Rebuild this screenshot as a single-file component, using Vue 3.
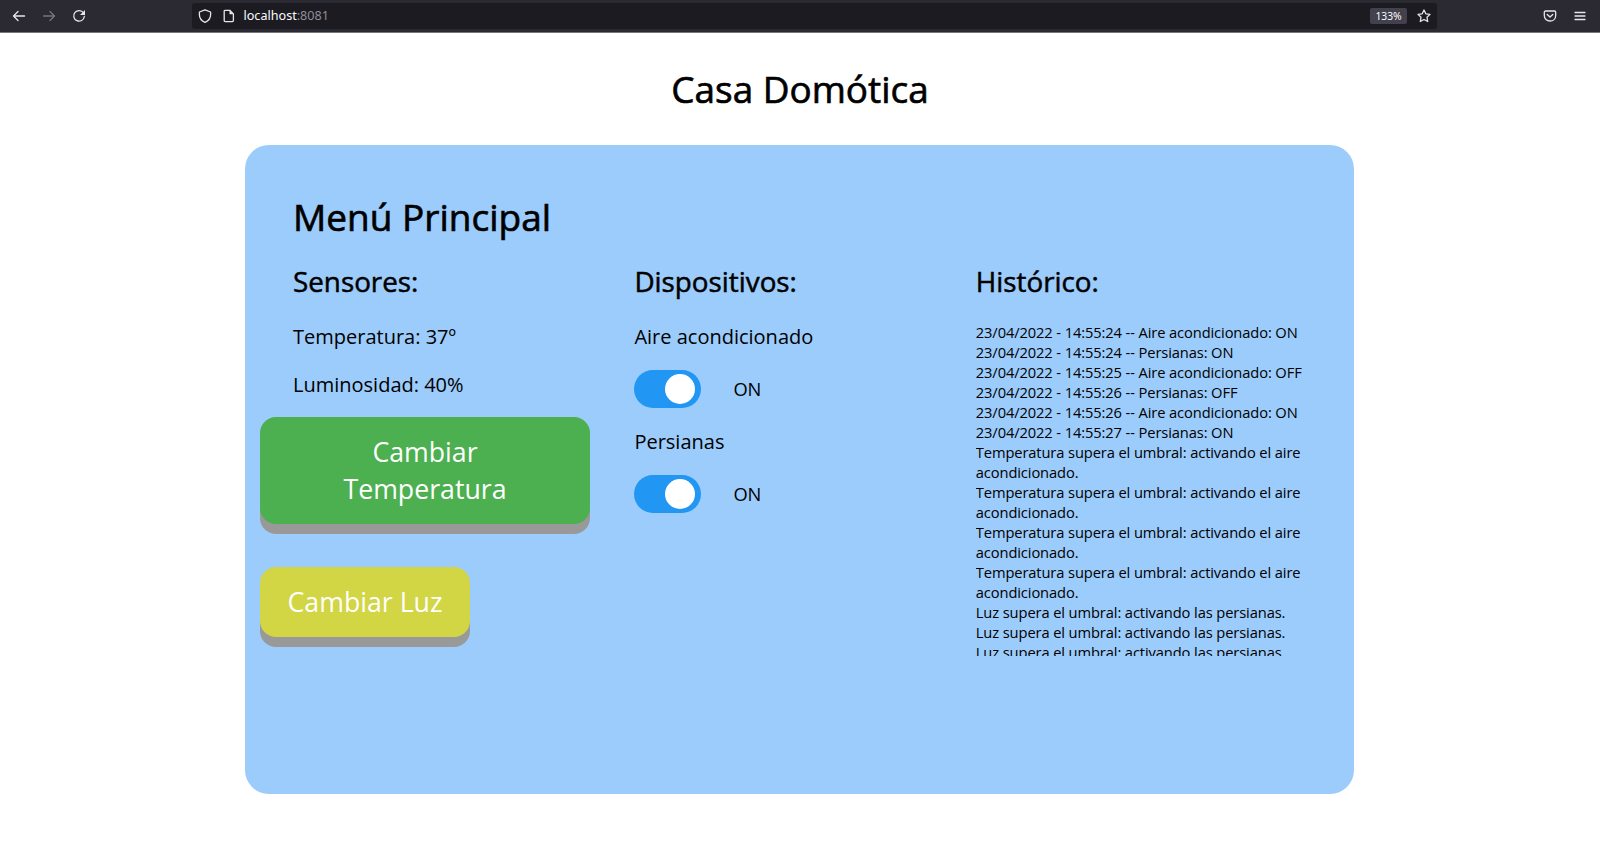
<script setup>
import { ref } from 'vue'

const devices = ref([
  { name: 'Aire acondicionado', on: true },
  { name: 'Persianas', on: true },
])

const hot = 'Temperatura supera el umbral: activando el aire acondicionado.'
const bright = 'Luz supera el umbral: activando las persianas.'
const log = [
  '23/04/2022 - 14:55:24 -- Aire acondicionado: ON',
  '23/04/2022 - 14:55:24 -- Persianas: ON',
  '23/04/2022 - 14:55:25 -- Aire acondicionado: OFF',
  '23/04/2022 - 14:55:26 -- Persianas: OFF',
  '23/04/2022 - 14:55:26 -- Aire acondicionado: ON',
  '23/04/2022 - 14:55:27 -- Persianas: ON',
  hot, hot, hot, hot,
  bright, bright, bright,
]
</script>

<template>
  <div class="page">
    <header class="toolbar">
      <nav class="nav">
        <svg width="14" height="14" viewBox="0 0 14 14"><path d="M12.500 7H1.500M6 2.500L1.500 7 6 11.500" /></svg>
        <svg class="dim" width="14" height="14" viewBox="0 0 14 14"><path d="M1.500 7h11M8 2.500L12.500 7 8 11.500" /></svg>
        <svg width="14" height="14" viewBox="0 0 14 14"><path d="M11.500 4A5.300 5.300 0 1 0 12.300 7.500" /><path class="solid" d="M13 1v5H8z" /></svg>
      </nav>
      <div class="address">
        <svg width="14" height="14" viewBox="0 0 14 14"><path d="M7 .8L12.600 3v2.700c0 3.500-2 6-5.600 7.600C3.400 11.700 1.400 9.200 1.400 5.700V3z" /></svg>
        <svg class="doc" width="12" height="14" viewBox="0 0 12 14"><path d="M2.200 1.300h4.600l3.600 3.600v6.700c0 .6-.4 1-1 1H2.200c-.6 0-1-.4-1-1V2.300c0-.6.4-1 1-1z" /><path class="solid" d="M6.500 1v4.300h4.200z" /></svg>
        <span class="url">localhost<span class="port">:8081</span></span>
        <span class="zoom">133%</span>
        <svg width="14" height="14" viewBox="0 0 14 14"><path d="M7 1l1.800 3.800 4.200.6-3 2.900.7 4.200L7 10.500l-3.700 2 .7-4.200-3-2.900 4.200-.6z" /></svg>
      </div>
      <div class="tools">
        <svg width="14" height="14" viewBox="0 0 14 14"><path d="M2.500 2h9c.7 0 1.200.5 1.200 1.200v3.200C12.700 9.700 10.200 12 7 12S1.300 9.700 1.300 6.400V3.200C1.300 2.500 1.800 2 2.500 2zM4.200 5.500L7 8.100l2.800-2.600" /></svg>
        <svg width="12" height="12" viewBox="0 0 12 12"><path d="M1 2.500h10M1 6h10M1 9.500h10" /></svg>
      </div>
    </header>

    <h1 class="title">Casa Domótica</h1>

    <main class="card">
      <h1 class="menu">Menú Principal</h1>
      <div class="columns">
        <section>
          <h2>Sensores:</h2>
          <p class="reading">Temperatura: 37º</p>
          <p class="reading">Luminosidad: 40%</p>
          <div class="actions">
            <button class="btn temp">Cambiar Temperatura</button>
            <button class="btn light">Cambiar Luz</button>
          </div>
        </section>
        <section>
          <h2>Dispositivos:</h2>
          <div v-for="d in devices" :key="d.name" class="device">
            <p class="name">{{ d.name }}</p>
            <div class="control">
              <button class="switch" :class="{ on: d.on }" :aria-label="d.name" @click="d.on = !d.on"><i class="knob"></i></button>
              <span class="state">{{ d.on ? 'ON' : 'OFF' }}</span>
            </div>
          </div>
        </section>
        <section>
          <h2>Histórico:</h2>
          <div class="log">
            <div v-for="(line, i) in log" :key="i">{{ line }}</div>
          </div>
        </section>
      </div>
    </main>
  </div>
</template>

<style>
body { margin: 0; background: #fff; }
</style>

<style scoped>
* { box-sizing: border-box; }
h1, h2, p { margin: 0; font-weight: 500; }
h1 { -webkit-text-stroke: .65px #000; }
h2 { -webkit-text-stroke: .5px #000; }
.page { height: 859px; overflow: hidden; background: #fff; color: #000; font-family: "Open Sans", "Noto Sans", sans-serif; }

.toolbar { display: flex; align-items: center; height: 33px; padding-bottom: 1px; background: #2b2a33; border-bottom: 1px solid #77767b; }
svg { display: block; flex: none; fill: none; stroke: #e6e6ea; stroke-width: 1.3; stroke-linecap: round; stroke-linejoin: round; }
svg .solid { fill: #e6e6ea; stroke: none; }
.dim { opacity: .4; }
.nav { display: flex; gap: 16px; width: 192px; padding-left: 12px; }
.address { display: flex; align-items: center; width: 1245px; height: 26px; padding: 0 6px; background: #1c1b22; border-radius: 3px; }
.doc { margin-left: 11px; }
.url { flex: 1; margin-left: 8.500px; font: 12.600px/20px "Noto Sans", sans-serif; color: #fbfbfe; }
.port { color: #8f8e96; }
.zoom { width: 37px; height: 16px; margin-right: 10px; border-radius: 2px; background: #42414d; color: #fbfbfe; font: 10.300px/16px "Noto Sans", sans-serif; text-align: center; }
.tools { display: flex; align-items: center; gap: 17px; margin-left: auto; padding-right: 14px; }

.title { margin-top: 32px; line-height: 49px; font-size: 36.900px; text-align: center; }
.card { width: 1109px; height: 649px; margin: 31px 0 0 245px; padding: 47px 37px 0 48px; border-radius: 24px; background: #9cccfb; }
.menu { line-height: 49px; font-size: 37px; }
.columns { display: grid; grid-template-columns: repeat(3, 341.400px); margin-top: 20px; }
h2 { line-height: 40px; font-size: 27.800px; }
.reading, .name { font-weight: 400; font-size: 20px; line-height: 28px; }
.reading { margin-top: 20px; }
h2 + .reading { margin-top: 22px; }
.actions { display: flex; flex-direction: column; align-items: flex-start; margin: 18px 0 0 -33px; }
.btn { padding: 17px 28px; border: 0; border-radius: 16px; color: #fff; font: 400 26.700px/36.500px "Open Sans", sans-serif; box-shadow: 0 10px #999; }
.temp { width: 330px; height: 107px; background: #4caf50; }
.light { width: 210px; height: 70px; padding: 17px 0; margin-top: 43px; background: #d2d544; }
.device { height: 105px; }
h2 + .device { margin-top: 22px; }
.control { display: flex; align-items: center; margin-top: 19px; }
.switch { display: flex; align-items: center; width: 67px; height: 38px; padding: 0 6px; border: 0; border-radius: 19px; background: #ccc; }
.switch.on { justify-content: flex-end; background: #2196f3; }
.knob { width: 30px; height: 30px; border-radius: 50%; background: #fff; }
.state { margin-left: 32px; font-size: 18.300px; line-height: 26px; }
.log { width: 341px; height: 334px; margin-top: 21px; overflow: hidden; font-size: 14.700px; line-height: 20px; letter-spacing: -.11px; }
</style>
